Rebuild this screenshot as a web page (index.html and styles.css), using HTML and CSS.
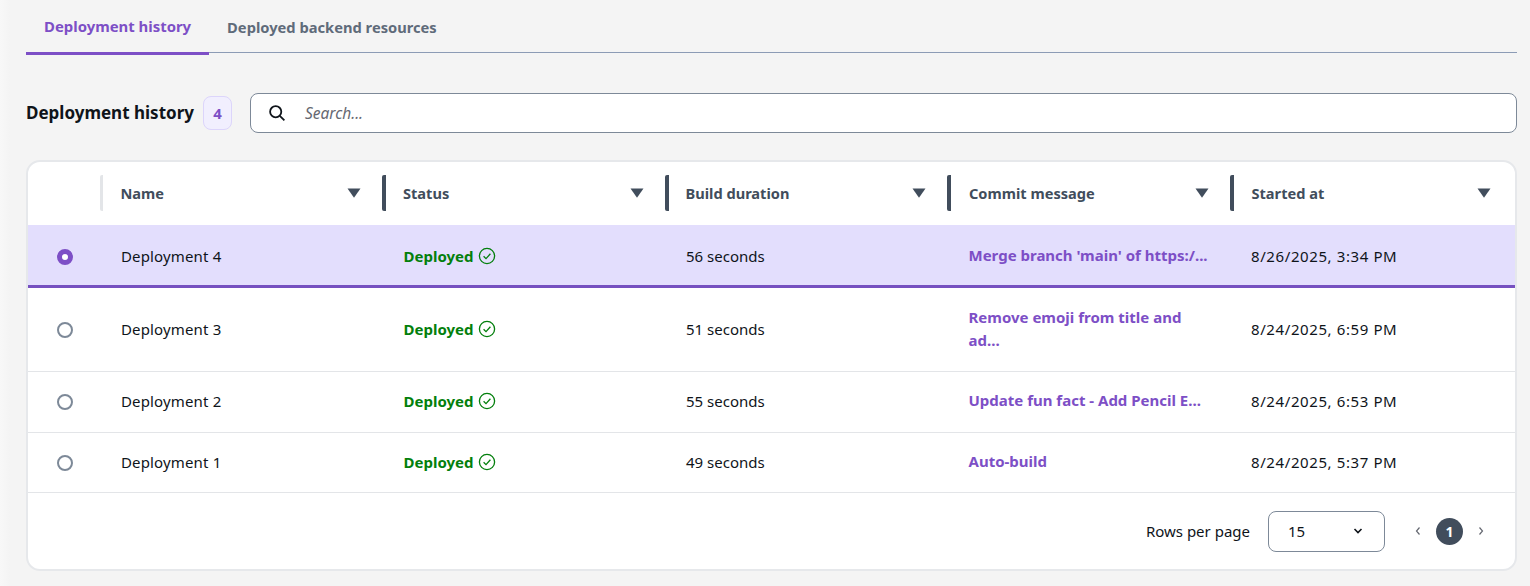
FILE: index.html
```html
<!DOCTYPE html>
<html lang="en">

<head>
    <meta charset="UTF-8">
    <title>Deployment history</title>
    <link rel="stylesheet" href="styles.css">
</head>

<body>
    <svg class="defs" width="0" height="0">
        <symbol id="caret" viewBox="0 0 14 10"><path d="M0.5 0.5h13L7 9.8z" fill="#414d5c"/></symbol>
        <symbol id="check" viewBox="0 0 18 18"><circle cx="9" cy="9" r="7.6" fill="none" stroke="#037f0c" stroke-width="1.3"/><path d="M5.6 9.2l2.4 2.4 4.4-4.8" fill="none" stroke="#037f0c" stroke-width="1.3"/></symbol>
    </svg>

    <nav class="tabs">
        <a class="tab active">Deployment history</a>
        <a class="tab">Deployed backend resources</a>
    </nav>

    <div class="toolbar">
        <h2>Deployment history</h2>
        <span class="count">4</span>
        <div class="search">
            <svg width="18" height="18" viewBox="0 0 18 18"><circle cx="7.7" cy="7.7" r="5.6" fill="none" stroke="#0f141a" stroke-width="1.8"/><path d="M11.8 11.8l4.6 4.6" stroke="#0f141a" stroke-width="1.8"/></svg>
            <span>Search...</span>
        </div>
    </div>

    <div class="card">
        <table>
            <thead>
                <tr>
                    <th class="col-select"><span class="th-in"></span></th>
                    <th class="col"><span class="th-in first"><b>Name</b><svg class="caret"><use href="#caret"/></svg></span></th>
                    <th class="col"><span class="th-in"><b>Status</b><svg class="caret"><use href="#caret"/></svg></span></th>
                    <th class="col"><span class="th-in"><b>Build duration</b><svg class="caret"><use href="#caret"/></svg></span></th>
                    <th class="col"><span class="th-in commit"><b>Commit message</b><svg class="caret"><use href="#caret"/></svg></span></th>
                    <th><span class="th-in last"><b>Started at</b><svg class="caret"><use href="#caret"/></svg></span></th>
                </tr>
            </thead>
            <tbody>
                <tr class="selected row-a">
                    <td class="col-select"><span class="radio on"></span></td>
                    <td class="name">Deployment 4</td>
                    <td><span class="ok">Deployed<svg class="check"><use href="#check"/></svg></span></td>
                    <td>56 seconds</td>
                    <td><a class="link">Merge branch 'main' of https:/...</a></td>
                    <td class="date">8/26/2025, 3:34 PM</td>
                </tr>
                <tr class="row-b">
                    <td class="col-select"><span class="radio"></span></td>
                    <td class="name">Deployment 3</td>
                    <td><span class="ok">Deployed<svg class="check"><use href="#check"/></svg></span></td>
                    <td>51 seconds</td>
                    <td><a class="link">Remove emoji from title and<br>ad...</a></td>
                    <td class="date">8/24/2025, 6:59 PM</td>
                </tr>
                <tr class="row-c">
                    <td class="col-select"><span class="radio"></span></td>
                    <td class="name">Deployment 2</td>
                    <td><span class="ok">Deployed<svg class="check"><use href="#check"/></svg></span></td>
                    <td>55 seconds</td>
                    <td><a class="link">Update fun fact - Add Pencil E...</a></td>
                    <td class="date">8/24/2025, 6:53 PM</td>
                </tr>
                <tr class="row-d">
                    <td class="col-select"><span class="radio"></span></td>
                    <td class="name">Deployment 1</td>
                    <td><span class="ok">Deployed<svg class="check"><use href="#check"/></svg></span></td>
                    <td>49 seconds</td>
                    <td><a class="link">Auto-build</a></td>
                    <td class="date">8/24/2025, 5:37 PM</td>
                </tr>
            </tbody>
        </table>

        <div class="pager">
            <span class="rows-label">Rows per page</span>
            <div class="select">
                <span>15</span>
                <svg width="10" height="6" viewBox="0 0 10 6"><path d="M1.5 1l3.5 3.5L8.500 1" fill="none" stroke="#0f141a" stroke-width="1.6"/></svg>
            </div>
            <div class="pages">
                <svg width="6" height="10" viewBox="0 0 6 10"><path d="M4.500 1.500L1.500 5l3 3.500" fill="none" stroke="#656871" stroke-width="1.200"/></svg>
                <span class="page">1</span>
                <svg width="6" height="10" viewBox="0 0 6 10"><path d="M1.500 1.500l3 3.500-3 3.500" fill="none" stroke="#656871" stroke-width="1.200"/></svg>
            </div>
        </div>
    </div>
</body>

</html>
```

FILE: styles.css
```css
* {
    box-sizing: border-box;
    margin: 0;
    padding: 0;
}

body {
    background: linear-gradient(90deg, #f8f8f8, #f4f4f4 10px);
    color: #0f141a;
    font-family: "Noto Sans", sans-serif;
    font-size: 15px;
    padding: 0 13px 0 26px;
    height: 586px;
    overflow: hidden;
}

.defs {
    position: absolute;
}

.tabs {
    display: flex;
    height: 53px;
    border-bottom: 1px solid #8c9bb5;
}

.tab {
    height: 55px;
    padding: 17px 18px 0;
    font-size: 14.700px;
    font-weight: 700;
    color: #5f6b7a;
    white-space: nowrap;
}

.tab.active {
    padding-top: 16px;
    font-size: 14.900px;
    color: #7d4fc6;
    border-bottom: 3px solid #7d4fc6;
}

.toolbar {
    display: flex;
    align-items: center;
    margin-top: 40px;
    height: 40px;
}

h2 {
    font-size: 17px;
    font-weight: 700;
    margin-top: -2px;
}

.count {
    display: flex;
    align-items: center;
    justify-content: center;
    width: 29px;
    height: 34px;
    margin-left: 9px;
    border: 1px solid #dcd5fb;
    border-radius: 8px;
    background-color: #f1effe;
    color: #7d4fc6;
    font-weight: 700;
}

.search {
    flex: 1;
    display: flex;
    align-items: center;
    gap: 19px;
    height: 40px;
    margin-left: 18px;
    padding-left: 17px;
    background-color: #fff;
    border: 1px solid #7d8998;
    border-radius: 8px;
    color: #656871;
    font-size: 15.500px;
    font-style: italic;
}

.card {
    margin-top: 27px;
    height: 411px;
    background-color: #fff;
    border: 2px solid #e6e8eb;
    border-radius: 14px;
    overflow: hidden;
}

table {
    width: 100%;
    border-collapse: collapse;
    table-layout: fixed;
}

th {
    height: 63px;
    padding: 0 0 2px;
    text-align: left;
    font-size: 14.600px;
    font-weight: 700;
    color: #414d5c;
}

th.col {
    width: 282.500px;
}

th.col-select {
    width: 71.500px;
}

.th-in {
    display: flex;
    align-items: center;
    justify-content: space-between;
    height: 36px;
    padding: 0 21px 0 17px;
    border-left: 4px solid #414d5c;
    border-radius: 2px;
}

.th-in b {
    font-weight: 700;
}

.th-in.first {
    border-left: 3px solid #e3e5e8;
    padding-left: 18px;
}

.th-in.commit {
    padding-left: 18px;
}

.th-in.last {
    padding-left: 18px;
    padding-right: 24px;
}

.col-select .th-in {
    border: none;
}

.caret {
    width: 14px;
    height: 10px;
}

td {
    padding: 0 20px 0 21.500px;
    border-bottom: 1px solid #e3e5e8;
}

td.col-select {
    padding: 0 0 0 29px;
}

td.name {
    letter-spacing: 0.150px;
}

td.date {
    letter-spacing: 0.600px;
}

.row-a td {
    height: 61px;
    padding-top: 2px;
}

.row-b td {
    height: 85px;
}

.row-c td {
    height: 61px;
    padding-bottom: 2px;
}

.row-d td {
    height: 60px;
}

.selected td {
    background-color: #e3defd;
    border-bottom: 3px solid #7650c0;
}

.radio {
    display: block;
    width: 16px;
    height: 16px;
    margin-top: 2px;
    border: 2px solid #7d8998;
    border-radius: 50%;
}

.radio.on {
    border: 5px solid #7d4fc6;
    background-color: #fff;
}

.ok {
    display: flex;
    align-items: center;
    gap: 5px;
    color: #037f0c;
    font-weight: 700;
}

.check {
    width: 18px;
    height: 18px;
}

.link {
    color: #7d4fc6;
    font-weight: 700;
    line-height: 23px;
    display: block;
    margin-top: -1px;
}

.pager {
    display: flex;
    align-items: center;
    justify-content: flex-end;
    height: 77px;
    padding-right: 31px;
}

.select {
    display: flex;
    align-items: center;
    justify-content: space-between;
    width: 117px;
    height: 41px;
    margin-left: 18px;
    padding: 0 21px 0 19px;
    border: 1px solid #7d8998;
    border-radius: 8px;
}

.pages {
    display: flex;
    align-items: center;
    gap: 15px;
    margin-left: 30px;
}

.page {
    display: flex;
    align-items: center;
    justify-content: center;
    width: 27px;
    height: 27px;
    border-radius: 50%;
    background-color: #414d5c;
    color: #fff;
    font-size: 14px;
    font-weight: 700;
}
```
